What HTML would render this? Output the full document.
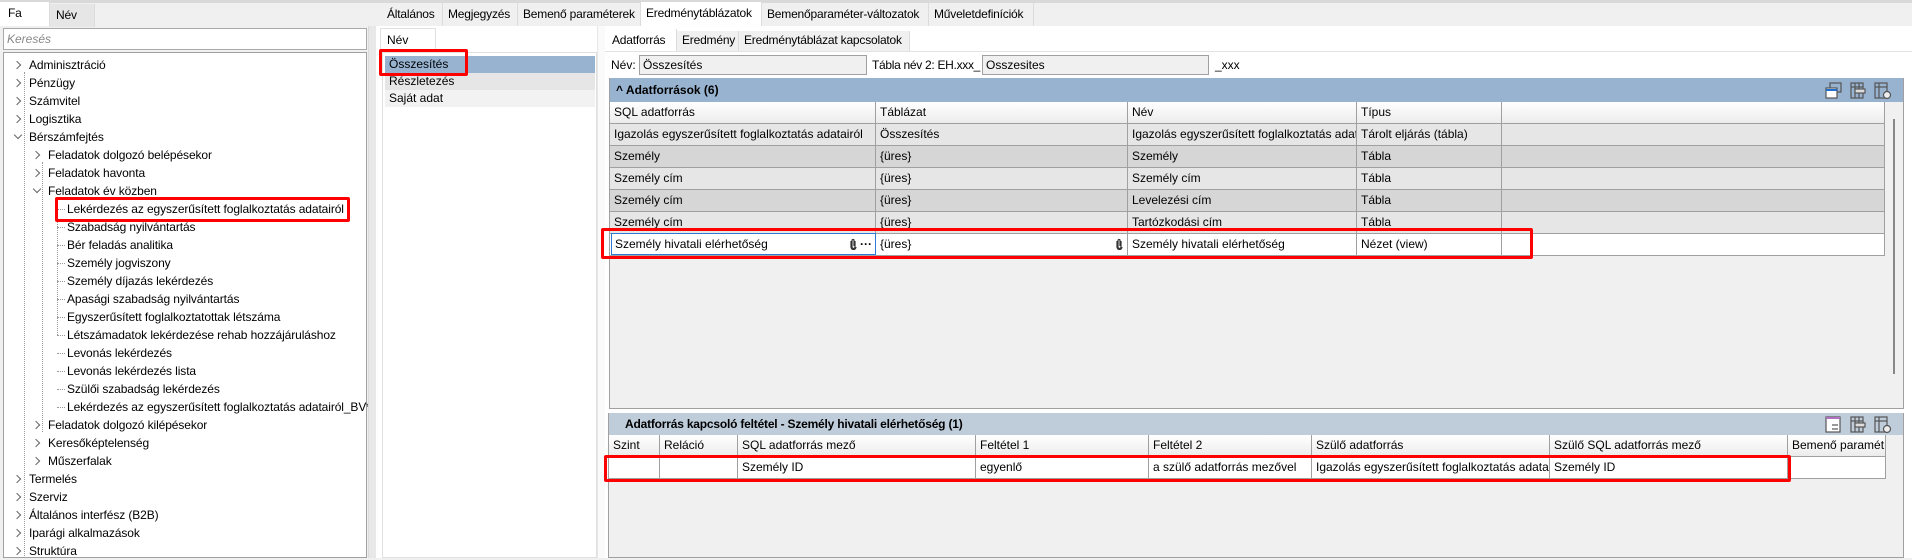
<!DOCTYPE html>
<html><head><meta charset="utf-8"><style>
*{box-sizing:border-box;margin:0;padding:0}
body{width:1912px;height:558px;overflow:hidden;background:#f0f0f0;font-family:"Liberation Sans",sans-serif;font-size:12px;color:#000;position:relative}
.a{position:absolute;white-space:nowrap}
.tab{position:absolute;top:3px;height:23px;line-height:22px;padding-left:5px;background:#f0f0f0;border-right:1px solid #dcdcdc;font-size:12px;letter-spacing:-0.2px;white-space:nowrap;overflow:hidden}
.tr{position:absolute;height:18px;line-height:18px;font-size:12px;white-space:nowrap;letter-spacing:-0.1px}
.chev{position:absolute;width:6px;height:6px;border-right:1.3px solid #666;border-bottom:1.3px solid #666}
.cell{position:absolute;height:22px;line-height:21px;padding-left:4px;border-right:1px solid #a0a0a0;border-bottom:1px solid #a0a0a0;overflow:hidden;white-space:nowrap}
.red{position:absolute;border:3px solid #f00;border-radius:2px}
.clip{position:absolute;top:4px}
</style></head><body>
<div class="a" style="left:0;top:0;width:1912px;height:3px;background:#d9d9d9"></div>
<div class="tab" style="left:0;width:50px;background:#fff;top:2px;height:24px;padding-left:8px">Fa</div>
<div class="tab" style="left:50px;width:45px;background:#e6e6e6;padding-left:6px;top:4px">Név</div>
<div class="a" style="left:3px;top:28px;width:364px;height:22px;background:#fff;border:1px solid #a9a9a9;color:#888;font-style:italic;line-height:20px;padding-left:3px;font-size:12px">Keresés</div>
<div class="a" style="left:3px;top:52px;width:364px;height:506px;background:#fff;border:1px solid #a0a0a0"></div>
<div class="a" style="left:24px;top:72px;height:486px;border-left:1px dotted #999"></div>
<div class="a" style="left:42px;top:162px;height:270px;border-left:1px dotted #999"></div>
<div class="a" style="left:57px;top:200px;height:135px;border-left:1px dotted #999"></div>
<div id="tree"></div>
<div class="red" style="left:55px;top:197px;width:295px;height:25px"></div>
<div class="a" style="left:368px;top:26px;width:8px;height:532px;background:#e8e8e8;border-left:1px solid #dadada"></div>

<div class="tab" style="left:382px;width:61px">Általános</div>
<div class="tab" style="left:443px;width:75px">Megjegyzés</div>
<div class="tab" style="left:518px;width:123px">Bemenő paraméterek</div>
<div class="tab" style="left:641px;width:121px;background:#fff;top:2px;height:24px">Eredménytáblázatok</div>
<div class="tab" style="left:762px;width:167px">Bemenőparaméter-változatok</div>
<div class="tab" style="left:929px;width:105px">Műveletdefiníciók</div>
<div class="a" style="left:376px;top:26px;width:1536px;height:532px;background:#fff"></div>

<div class="a" style="left:380px;top:28px;width:56px;height:24px;background:#fff;border:1px solid #e0e0e0;border-bottom:none;line-height:22px;padding-left:6px">Név</div>
<div class="a" style="left:382px;top:52px;width:215px;height:506px;background:#fff;border:1px solid #e0e0e0"></div>
<div class="a" style="left:385px;top:56px;width:210px;height:17px;background:#97b3d0;line-height:17px;padding-left:4px">Összesítés</div>
<div class="a" style="left:385px;top:73px;width:210px;height:17px;background:#e6e6e6;line-height:17px;padding-left:4px">Részletezés</div>
<div class="a" style="left:385px;top:90px;width:210px;height:17px;background:#f2f2f2;line-height:17px;padding-left:4px">Saját adat</div>
<div class="red" style="left:379px;top:49px;width:89px;height:27px"></div>

<div class="a" style="left:597px;top:26px;width:8px;height:532px;background:#fafafa;border-left:1px solid #e6e6e6"></div>
<div class="tab" style="left:607px;top:29px;width:70px;background:#fff;height:23px">Adatforrás</div>
<div class="tab" style="left:677px;top:31px;width:62px;background:#f0f0f0;height:20px;line-height:19px">Eredmény</div>
<div class="tab" style="left:739px;top:31px;width:171px;background:#f0f0f0;height:20px;line-height:19px">Eredménytáblázat kapcsolatok</div>
<div class="a" style="left:605px;top:51px;width:1307px;border-top:1px solid #e3e3e3"></div>
<div class="a" style="left:611px;top:57px;line-height:17px">Név:</div>
<div class="a" style="left:639px;top:55px;width:228px;height:20px;background:#f0f0f0;border:1px solid #a0a0a0;line-height:18px;padding-left:3px">Összesítés</div>
<div class="a" style="left:872px;top:57px;line-height:17px;letter-spacing:-0.3px">Tábla név 2: EH.xxx_</div>
<div class="a" style="left:982px;top:55px;width:227px;height:20px;background:#f0f0f0;border:1px solid #a0a0a0;line-height:18px;padding-left:3px">Osszesites</div>
<div class="a" style="left:1215px;top:57px;line-height:17px">_xxx</div>

<div class="a" style="left:609px;top:78px;width:1295px;height:331px;background:#f0f0f0;border:1px solid #a0a0a0"></div>
<div class="a" style="left:610px;top:78px;width:1293px;height:24px;background:#97b3d0;font-weight:bold;line-height:24px;padding-left:6px">^ Adatforrások (6)</div>
<svg class="a" style="left:1824px;top:81px" width="76" height="19" viewBox="0 0 76 19" fill="none" stroke="#555" stroke-width="1.2">
<rect x="6" y="2" width="11" height="9"/><rect x="2" y="7" width="11" height="10" fill="#fff"/><line x1="2" y1="9" x2="13" y2="9" stroke="#1e6fd0" stroke-width="2"/>
<rect x="27" y="2" width="12" height="15"/><line x1="27" y1="6" x2="39" y2="6"/><line x1="31" y1="2" x2="31" y2="17"/><line x1="35" y1="2" x2="35" y2="17"/><rect x="31" y="8" width="10" height="4" fill="#ddd"/>
<rect x="51" y="2" width="12" height="15"/><line x1="51" y1="6" x2="63" y2="6"/><line x1="55" y1="2" x2="55" y2="17"/><circle cx="63" cy="14" r="3.5" fill="#eee"/>
</svg>
<div id="ug"></div>
<div class="a" style="left:611px;top:233px;width:265px;height:22px;background:#fff;border:1px solid #2d7ad6;line-height:20px;padding-left:3px">Személy hivatali elérhetőség
<svg class="clip" style="right:18px" width="7" height="12" viewBox="0 0 7 12" fill="none" stroke="#333" stroke-width="1.2"><path d="M5 3v6a1.5 1.5 0 0 1-3 0V2.5a1 1 0 0 1 2 0V8"/><path d="M1 3v6a2.5 2.5 0 0 0 5 0"/></svg>
<span style="position:absolute;right:3px;top:0;font-weight:bold">···</span></div>
<svg class="a" style="left:1116px;top:238px" width="7" height="12" viewBox="0 0 7 12" fill="none" stroke="#333" stroke-width="1.2"><path d="M5 3v6a1.5 1.5 0 0 1-3 0V2.5a1 1 0 0 1 2 0V8"/><path d="M1 3v6a2.5 2.5 0 0 0 5 0"/></svg>
<div class="a" style="left:1893px;top:119px;width:2px;height:255px;background:#888"></div>
<div class="red" style="left:601px;top:228px;width:932px;height:31px"></div>

<div class="a" style="left:608px;top:413px;width:1296px;height:145px;background:#f0f0f0;border:1px solid #a0a0a0"></div>
<div class="a" style="left:609px;top:413px;width:1294px;height:22px;background:#bfcddb;font-weight:bold;line-height:22px;padding-left:16px;letter-spacing:-0.2px">Adatforrás kapcsoló feltétel - Személy hivatali elérhetőség (1)</div>
<svg class="a" style="left:1824px;top:415px" width="76" height="19" viewBox="0 0 76 19" fill="none" stroke="#555" stroke-width="1.2">
<rect x="2" y="2" width="14" height="15" fill="#fff"/><line x1="2" y1="3" x2="16" y2="3" stroke="#b070c0" stroke-width="2"/><line x1="8" y1="10" x2="14" y2="10"/><line x1="8" y1="14" x2="14" y2="14"/>
<rect x="27" y="2" width="12" height="15"/><line x1="27" y1="6" x2="39" y2="6"/><line x1="31" y1="2" x2="31" y2="17"/><line x1="35" y1="2" x2="35" y2="17"/><rect x="31" y="8" width="10" height="4" fill="#ddd"/>
<rect x="51" y="2" width="12" height="15"/><line x1="51" y1="6" x2="63" y2="6"/><line x1="55" y1="2" x2="55" y2="17"/><circle cx="63" cy="14" r="3.5" fill="#eee"/>
</svg>
<div id="lg"></div>
<div class="red" style="left:604px;top:455px;width:1187px;height:27px"></div>

<script>
var t=[[0,1,"Adminisztráció"],[0,1,"Pénzügy"],[0,1,"Számvitel"],[0,1,"Logisztika"],[0,2,"Bérszámfejtés"],[1,1,"Feladatok dolgozó belépésekor"],[1,1,"Feladatok havonta"],[1,2,"Feladatok év közben"],[2,0,"Lekérdezés az egyszerűsített foglalkoztatás adatairól"],[2,0,"Szabadság nyilvántartás"],[2,0,"Bér feladás analitika"],[2,0,"Személy jogviszony"],[2,0,"Személy díjazás lekérdezés"],[2,0,"Apasági szabadság nyilvántartás"],[2,0,"Egyszerűsített foglalkoztatottak létszáma"],[2,0,"Létszámadatok lekérdezése rehab hozzájáruláshoz"],[2,0,"Levonás lekérdezés"],[2,0,"Levonás lekérdezés lista"],[2,0,"Szülői szabadság lekérdezés"],[2,0,"Lekérdezés az egyszerűsített foglalkoztatás adatairól_BV*"],[1,1,"Feladatok dolgozó kilépésekor"],[1,1,"Keresőképtelenség"],[1,1,"Műszerfalak"],[0,1,"Termelés"],[0,1,"Szerviz"],[0,1,"Általános interfész (B2B)"],[0,1,"Iparági alkalmazások"],[0,1,"Struktúra"]];
var h="";t.forEach(function(r,i){var y=56+i*18;var tx=[29,48,67][r[0]];h+='<div class="tr" style="left:'+tx+'px;top:'+y+'px">'+r[2]+'</div>';
var cx=[14,33,0][r[0]];if(r[1]==1)h+='<div class="chev" style="left:'+cx+'px;top:'+(y+6)+'px;transform:rotate(-45deg)"></div>';
if(r[1]==2)h+='<div class="chev" style="left:'+(cx+1)+'px;top:'+(y+4)+'px;transform:rotate(45deg)"></div>';
if(r[0]==2)h+='<div class="a" style="left:57px;top:'+(y+9)+'px;width:8px;border-top:1px dotted #999"></div>';});
document.getElementById("tree").innerHTML=h;
var cx=[610,876,1128,1357,1502,1885],rows=[["SQL adatforrás","Táblázat","Név","Típus",""],["Igazolás egyszerűsített foglalkoztatás adatairól","Összesítés","Igazolás egyszerűsített foglalkoztatás adatairól","Tárolt eljárás (tábla)",""],["Személy","{üres}","Személy","Tábla",""],["Személy cím","{üres}","Személy cím","Tábla",""],["Személy cím","{üres}","Levelezési cím","Tábla",""],["Személy cím","{üres}","Tartózkodási cím","Tábla",""],["","{üres}","Személy hivatali elérhetőség","Nézet (view)",""]];
var bg=["linear-gradient(#fff,#ececec)","#e6e6e6","#d6d6d6","#e6e6e6","#d6d6d6","#e6e6e6","#fff"];
h="";rows.forEach(function(r,i){var y=102+i*22;for(var c=0;c<5;c++){h+='<div class="cell" style="left:'+cx[c]+'px;top:'+y+'px;width:'+(cx[c+1]-cx[c])+'px;background:'+bg[i]+'">'+r[c]+'</div>';}});
document.getElementById("ug").innerHTML=h;
var lx=[609,660,738,976,1149,1312,1550,1788,1886],lr=[["Szint","Reláció","SQL adatforrás mező","Feltétel 1","Feltétel 2","Szülő adatforrás","Szülő SQL adatforrás mező","Bemenő paramét"],["","","Személy ID","egyenlő","a szülő adatforrás mezővel","Igazolás egyszerűsített foglalkoztatás adatairól","Személy ID",""]];
h="";lr.forEach(function(r,i){var y=435+i*22;for(var c=0;c<8;c++){h+='<div class="cell" style="left:'+lx[c]+'px;top:'+y+'px;width:'+(lx[c+1]-lx[c])+'px;background:'+(i?'#fff':'linear-gradient(#fff,#ececec)')+'">'+r[c]+'</div>';}});
document.getElementById("lg").innerHTML=h;
</script>
</body></html>
